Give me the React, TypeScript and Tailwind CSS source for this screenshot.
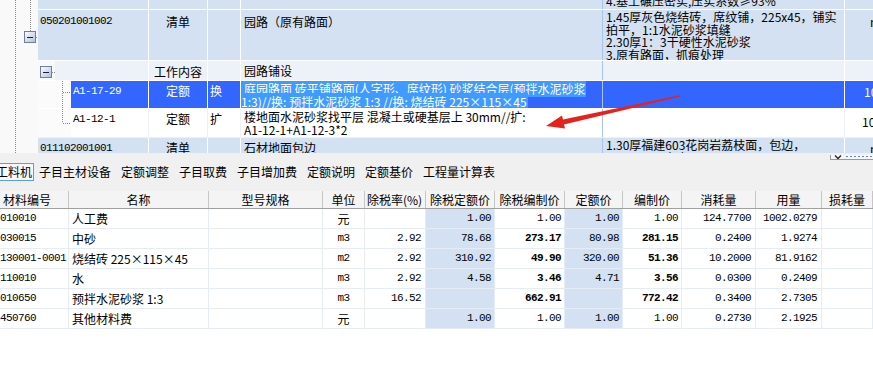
const cjk = "font-['Noto_Sans_CJK_SC',sans-serif]";
const mono = "font-['Liberation_Mono','Noto_Sans_CJK_SC',monospace] text-[11px] tracking-[-0.6px]";

const Btn = ({ x, y }: { x: number; y: number }) => (
  <g>
    <rect x={x + 0.5} y={y + 0.5} width="11" height="11" fill="url(#btnGrad)" stroke="#6f7f9c" />
    <line x1={x + 3} y1={y + 6.5} x2={x + 9} y2={y + 6.5} stroke="#1c1c3c" />
  </g>
);

const materials = [
  { code: "010010", name: "人工费", unit: "元", rate: "", dsde: "1.00", dsbz: "1.00", de: "1.00", bz: "1.00", xh: "124.7700", yl: "1002.0279", bold: false },
  { code: "030015", name: "中砂", unit: "m3", rate: "2.92", dsde: "78.68", dsbz: "273.17", de: "80.98", bz: "281.15", xh: "0.2400", yl: "1.9274", bold: true },
  { code: "130001-0001", name: "烧结砖 225×115×45", unit: "m2", rate: "2.92", dsde: "310.92", dsbz: "49.90", de: "320.00", bz: "51.36", xh: "10.2000", yl: "81.9162", bold: true },
  { code: "110010", name: "水", unit: "m3", rate: "2.92", dsde: "4.58", dsbz: "3.46", de: "4.71", bz: "3.56", xh: "0.0300", yl: "0.2409", bold: true },
  { code: "010650", name: "预拌水泥砂浆 1:3", unit: "m3", rate: "16.52", dsde: "", dsbz: "662.91", de: "", bz: "772.42", xh: "0.3400", yl: "2.7305", bold: true },
  { code: "450760", name: "其他材料费", unit: "元", rate: "", dsde: "1.00", dsbz: "1.00", de: "1.00", bz: "1.00", xh: "0.2730", yl: "2.1925", bold: false },
];

const tabs = ["子目主材设备", "定额调整", "子目取费", "子目增加费", "定额说明", "定额基价", "工程量计算表"];

const headers = [
  { t: "材料编号", w: "w-[69px]", a: "justify-start pl-[3px]" },
  { t: "名称", w: "w-[140px]", a: "justify-center" },
  { t: "型号规格", w: "w-[114px]", a: "justify-center" },
  { t: "单位", w: "w-[42px]", a: "justify-center" },
  { t: "除税率(%)", w: "w-[61px]", a: "justify-start pl-[2px]" },
  { t: "除税定额价", w: "w-[69px]", a: "justify-center" },
  { t: "除税编制价", w: "w-[70px]", a: "justify-center" },
  { t: "定额价", w: "w-[58px]", a: "justify-center" },
  { t: "编制价", w: "w-[59px]", a: "justify-center" },
  { t: "消耗量", w: "w-[74px]", a: "justify-center" },
  { t: "用量", w: "w-[66px]", a: "justify-center" },
  { t: "损耗量", w: "w-[51px]", a: "justify-center" },
];

const line = "border-r border-white";

const App = () => {
  return (
    <div className={`relative h-[371px] w-[873px] overflow-hidden bg-white text-[12px] text-black ${cjk}`}>
      {/* upper grid */}
      <div className="flex h-[153px] overflow-hidden">
        <svg width="38" height="153" className="shrink-0 bg-[#f9f9f9]">
          <defs>
            <linearGradient id="btnGrad" x1="0" y1="0" x2="1" y2="1">
              <stop offset="0" stopColor="#ffffff" />
              <stop offset="1" stopColor="#aebfd8" />
            </linearGradient>
          </defs>
          <line x1="15.5" y1="0" x2="15.5" y2="153" stroke="#8a8a8a" strokeDasharray="1 1" />
          <line x1="30.5" y1="0" x2="30.5" y2="31" stroke="#8a8a8a" strokeDasharray="1 1" />
          <line x1="36" y1="37.5" x2="38" y2="37.5" stroke="#8a8a8a" strokeDasharray="1 1" />
          <Btn x={24} y={31} />
        </svg>

        <div className="flex w-[835px] flex-col">
          {/* row 1 (clipped) */}
          <div className="flex h-[10px] shrink-0 border-b border-white bg-[#d3e1f2]">
            <div className={`w-[111px] ${line}`} />
            <div className={`w-[59px] ${line}`} />
            <div className={`w-[33px] ${line}`} />
            <div className="w-[362px] border-r border-[#a8c4ec]" />
            <div className={`w-[242px] overflow-hidden pl-[3px] ${line}`}>
              <div className="mt-[-5px] whitespace-nowrap leading-[12px]">4.基土碾压密实,压实系数≥93%</div>
            </div>
            <div className="w-[28px]" />
          </div>

          {/* row 2 */}
          <div className="flex h-[51px] shrink-0 border-b border-white bg-[#d3e1f2]">
            <div className={`w-[111px] pl-[2px] pt-[3px] ${mono} ${line}`}>050201001002</div>
            <div className={`w-[59px] pt-[3px] text-center ${line}`}>清单</div>
            <div className={`w-[33px] ${line}`} />
            <div className="w-[362px] border-r border-[#a8c4ec] pl-[3px] pt-[3px]">园路（原有路面）</div>
            <div className={`w-[242px] overflow-hidden whitespace-nowrap pl-[3px] pt-[1px] leading-[12.5px] ${line}`}>
              <div>1.45厚灰色烧结砖，席纹铺，225x45，铺实</div>
              <div>拍平，1:1水泥砂浆填缝</div>
              <div>2.30厚1：3干硬性水泥砂浆</div>
              <div>3.原有路面，抓痕处理</div>
            </div>
            <div className="w-[28px] overflow-hidden pl-[25px] pt-[3px]">m</div>
          </div>

          {/* row 3 */}
          <div className="flex h-[20px] shrink-0 border-b border-white">
            <svg width="17" height="19" className="shrink-0 bg-[#f7f9fb]">
              <Btn x={2} y={5} />
              <line x1="14" y1="11.5" x2="17" y2="11.5" stroke="#8a8a8a" strokeDasharray="1 1" />
            </svg>
            <div className="flex flex-1 bg-[#edf2f8]">
              <div className={`w-[94px] ${line}`} />
              <div className={`w-[59px] pt-[2px] text-center ${line}`}>工作内容</div>
              <div className={`w-[33px] ${line}`} />
              <div className="w-[362px] border-r border-[#a8c4ec] pl-[3px] pt-[1px]">园路铺设</div>
              <div className={`w-[242px] ${line}`} />
              <div className="w-[28px]" />
            </div>
          </div>

          {/* row 4 selected */}
          <div className="flex h-[28px] shrink-0 border-b border-white">
            <svg width="33" height="27" className="shrink-0 bg-[#fbfbfb]">
              <line x1="24.5" y1="0" x2="24.5" y2="27" stroke="#8a8a8a" strokeDasharray="1 1" />
              <line x1="25" y1="11.5" x2="33" y2="11.5" stroke="#8a8a8a" strokeDasharray="1 1" />
            </svg>
            <div className="flex flex-1 bg-[#3366ff] text-white">
              <div className={`w-[78px] pl-[2px] pt-[2px] ${mono} ${line}`}>A1-17-29</div>
              <div className={`w-[59px] pt-[1px] text-center ${line}`}>定额</div>
              <div className={`w-[33px] pl-[2px] pt-[1px] ${line}`}>换</div>
              <div className="w-[362px] overflow-hidden whitespace-nowrap border-r border-[#a8c4ec] pt-[1px] leading-[13px]">
                <div>
                  <span className="bg-[#3f9bff] pl-[3px]">庭园路面 砖平铺路面(人字形、席纹形) 砂浆结合层(预拌水泥砂浆</span>
                </div>
                <div>
                  <span className="bg-[#3f9bff] pr-[1px]">1:3)//换: 预拌水泥砂浆 1:3 //换: 烧结砖 225×115×45</span>
                </div>
              </div>
              <div className={`w-[242px] ${line}`} />
              <div className="w-[28px] overflow-hidden whitespace-nowrap pl-[19px] pt-[2px]">10</div>
            </div>
          </div>

          {/* row 5 */}
          <div className="flex h-[29px] shrink-0 border-b border-[#eef2f8]">
            <svg width="33" height="28" className="shrink-0 bg-[#fbfbfb]">
              <line x1="24.5" y1="0" x2="24.5" y2="14" stroke="#8a8a8a" strokeDasharray="1 1" />
              <line x1="25" y1="14.5" x2="33" y2="14.5" stroke="#8a8a8a" strokeDasharray="1 1" />
            </svg>
            <div className="flex flex-1 bg-white">
              <div className={`w-[78px] border-r border-[#eef2f8] pl-[2px] pt-[2px] ${mono}`}>A1-12-1</div>
              <div className="w-[59px] border-r border-[#eef2f8] pt-[1px] text-center">定额</div>
              <div className="w-[33px] border-r border-[#eef2f8] pl-[2px] pt-[1px]">扩</div>
              <div className="w-[362px] overflow-hidden whitespace-nowrap border-r border-[#a8c4ec] pl-[3px] pt-[1px] leading-[13px]">
                <div>楼地面水泥砂浆找平层 混凝土或硬基层上 30mm//扩:</div>
                <div>A1-12-1+A1-12-3*2</div>
              </div>
              <div className="w-[242px] border-r border-[#eef2f8]" />
              <div className="w-[28px] overflow-hidden whitespace-nowrap pl-[17px] pt-[4px]">10</div>
            </div>
          </div>

          {/* row 6 */}
          <div className="flex h-[30px] shrink-0 bg-[#d3e1f2]">
            <div className={`w-[111px] pl-[2px] pt-[2px] ${mono} ${line}`}>011102001001</div>
            <div className={`w-[59px] pt-[1px] text-center ${line}`}>清单</div>
            <div className={`w-[33px] ${line}`} />
            <div className="w-[362px] border-r border-[#a8c4ec] pl-[3px] pt-[1px]">石材地面包边</div>
            <div className={`w-[242px] overflow-hidden whitespace-nowrap pl-[3px] pt-[1px] leading-[12.5px] ${line}`}>
              <div>1.30厚福建603花岗岩荔枝面，包边，</div>
              <div>300x300，宽度同面层</div>
            </div>
            <div className="w-[28px] overflow-hidden pl-[25px] pt-[2px]">m</div>
          </div>
        </div>
      </div>

      {/* scroll strip */}
      <div className="flex h-[7px] justify-end bg-[#f0f0f0] pt-[2px]">
        <svg width="43" height="5">
          <rect x="0.5" y="-1" width="43" height="5.5" fill="#f7f7f7" stroke="#9a9a9a" />
          <path d="M5 0.5 L8 3.5 L11 0.5" fill="none" stroke="#222" strokeWidth="1.3" />
          <line x1="16" y1="1.5" x2="43" y2="1.5" stroke="#5b86d6" strokeDasharray="2 2" />
        </svg>
      </div>

      {/* tabs */}
      <div className="flex h-[31px] items-start bg-[#f0f0f0] pt-[3px]">
        <div className="ml-[-6px] flex h-[18px] items-center border border-[#5a9ee6] bg-[#f6f8fb] px-[1px]">工料机</div>
        {tabs.map((t) => (
          <div key={t} className="flex h-[18px] items-center px-[5px]">
            {t}
          </div>
        ))}
      </div>

      {/* header */}
      <div className="flex h-[18px] border-b border-[#a0a0a0] bg-[#f4f4f4]">
        {headers.map((h) => (
          <div key={h.t} className={`flex items-center whitespace-nowrap border-r border-[#c6c6c6] ${h.w} ${h.a}`}>
            {h.t}
          </div>
        ))}
      </div>

      {/* material rows */}
      {materials.map((m) => {
        const b = m.bold ? "font-bold" : "";
        const cell = "flex items-center border-r border-[#e6ecf6]";
        return (
          <div key={m.code} className="flex h-[20px] border-b border-[#e6ecf6]">
            <div className={`${cell} w-[69px] ${mono}`}>{m.code}</div>
            <div className={`${cell} w-[140px] whitespace-nowrap pl-[3px]`}>{m.name}</div>
            <div className={`${cell} w-[114px]`} />
            <div className={`${cell} w-[42px] justify-center ${m.unit === "元" ? "" : mono}`}>{m.unit}</div>
            <div className={`${cell} w-[61px] justify-end pr-[4px] ${mono}`}>{m.rate}</div>
            <div className={`${cell} w-[69px] justify-end bg-[#d3e1f2] pr-[3px] ${mono}`}>{m.dsde}</div>
            <div className={`${cell} w-[70px] justify-end pr-[3px] ${mono} ${b}`}>{m.dsbz}</div>
            <div className={`${cell} w-[58px] justify-end bg-[#d3e1f2] pr-[3px] ${mono}`}>{m.de}</div>
            <div className={`${cell} w-[59px] justify-end pr-[3px] ${mono} ${b}`}>{m.bz}</div>
            <div className={`${cell} w-[74px] justify-end pr-[4px] ${mono}`}>{m.xh}</div>
            <div className={`${cell} w-[66px] justify-end pr-[4px] ${mono}`}>{m.yl}</div>
            <div className={`${cell} w-[51px]`} />
          </div>
        );
      })}

      {/* red annotation arrow */}
      <svg className="pointer-events-none absolute left-0 top-0" width="873" height="371">
        <polygon
          points="546,126 565,128.5 564,124.6 680.3,96.6 679.7,95.2 563,119.6 562,115.6"
          fill="#e5231d"
        />
      </svg>
    </div>
  );
};

export default App;
